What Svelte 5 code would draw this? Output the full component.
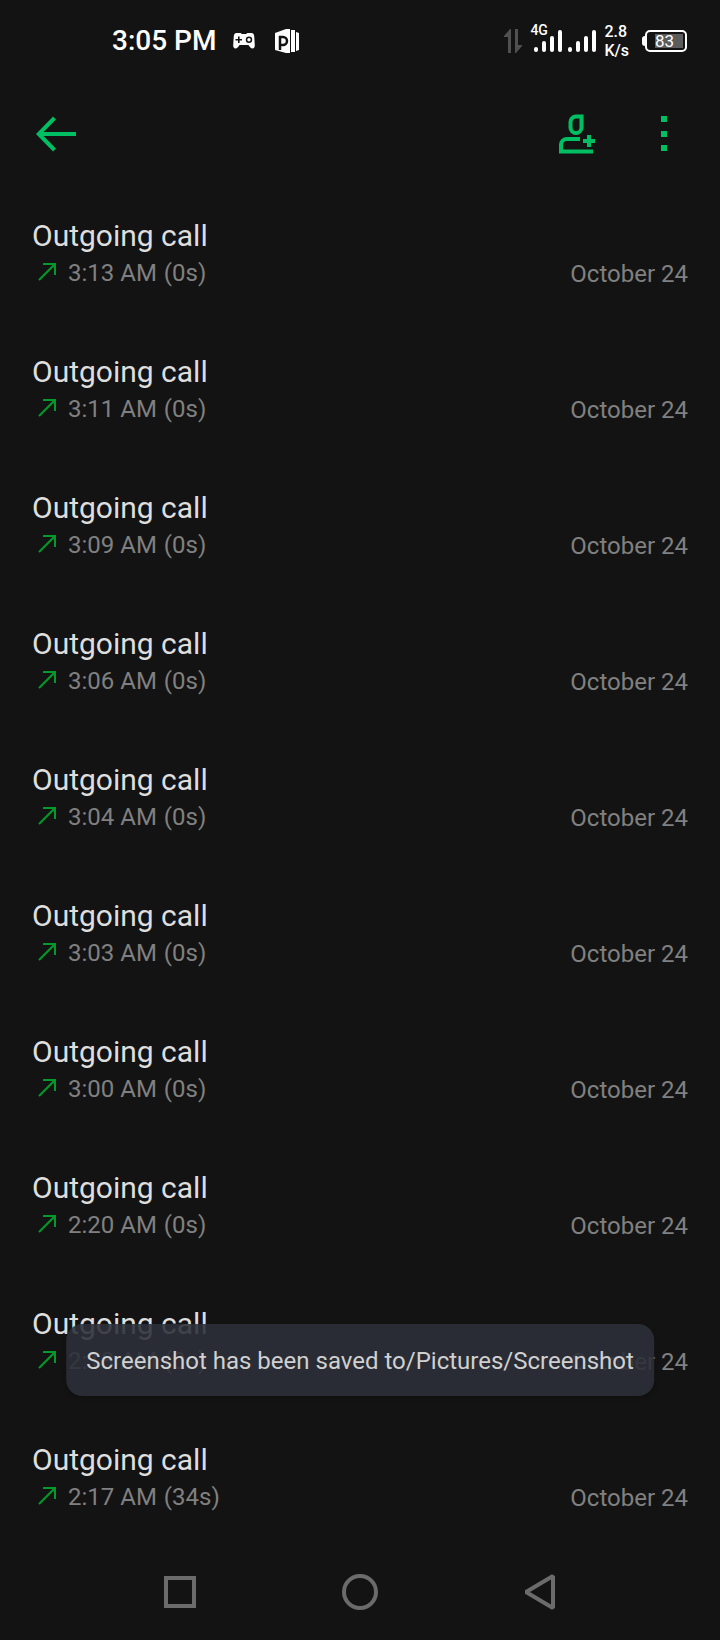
<script lang="ts">
    interface Call {
        time: string;
        duration: string;
        date: string;
    }

    const calls: Call[] = [
        {time: "3:13 AM", duration: "0s", date: "October 24"},
        {time: "3:11 AM", duration: "0s", date: "October 24"},
        {time: "3:09 AM", duration: "0s", date: "October 24"},
        {time: "3:06 AM", duration: "0s", date: "October 24"},
        {time: "3:04 AM", duration: "0s", date: "October 24"},
        {time: "3:03 AM", duration: "0s", date: "October 24"},
        {time: "3:00 AM", duration: "0s", date: "October 24"},
        {time: "2:20 AM", duration: "0s", date: "October 24"},
        {time: "2:18 AM", duration: "0s", date: "October 24"},
        {time: "2:17 AM", duration: "34s", date: "October 24"},
    ];
</script>

{#snippet bars()}
    <svg class="bars" width="28" height="22" viewBox="0 0 28 22" aria-hidden="true">
        <rect x="0" y="17" width="4" height="5" rx="2" />
        <rect x="8" y="11" width="4" height="11" rx="2" />
        <rect x="16" y="6" width="4" height="16" rx="2" />
        <rect x="24" y="0" width="4" height="22" rx="2" />
    </svg>
{/snippet}

<div class="screen">
    <div class="status-bar">
        <span class="clock">3:05 PM</span>
        <svg class="gamepad" width="22" height="16" viewBox="0 0 22 16" aria-hidden="true">
            <path
                fill="#fff"
                fill-rule="evenodd"
                d="M3.500 0h4l1.500 1h4l1.500-1h4C20 0 21 1 21.200 3l.6 9c.1 2-.8 3.500-2.300 3.500-1.700 0-2.500-1.500-4-3.500h-9C5 14 4.200 15.500 2.500 15.500 1 15.500.1 14 .2 12l.6-9C1 1 2 0 3.500 0zM5 3.500V6H2.500v1.600H5V10h1.600V7.600H9V6H6.600V3.500zM16 3.500a3.200 3.200 0 1 0 0 6.400 3.200 3.200 0 0 0 0-6.400z"
            />
            <circle cx="16" cy="6.700" r="1.700" fill="#fff" />
        </svg>
        <svg class="slides" width="24" height="24" viewBox="0 0 24 24" aria-hidden="true">
            <path fill="#fff" d="M0 4 11 0h5v24h-5L0 21z" />
            <path fill="#fff" d="M16 1h4v22h-4zM21 3l3 1v17l-3 1z" />
            <path fill="none" stroke="#131313" stroke-width="2.500" d="M5 21V8h3a4 4 0 0 1 0 8H5" />
            <path fill="none" stroke="#131313" stroke-width="1" d="M15.500 0v24M20.500 0v24" />
        </svg>

        <div class="status-right">
            <svg width="18" height="24" viewBox="0 0 18 24" aria-hidden="true">
                <path fill="#505050" d="M7 0v24H4V8H0V7l6-7zM11 0h3v16h4v1l-6 7h-1z" />
            </svg>
            <div class="signal">
                <span class="network">4G</span>
                {@render bars()}
                {@render bars()}
            </div>
            <div class="speed"><span>2.8</span><span>K/s</span></div>
            <div class="battery"><span class="level">83</span></div>
        </div>
    </div>

    <header class="app-bar">
        <button type="button" aria-label="Back">
            <svg width="40" height="36" viewBox="0 0 40 36" aria-hidden="true">
                <path fill="none" stroke="#00bf63" stroke-width="4" d="M18.500 2 2.700 18l15.800 16M3 18h37" />
            </svg>
        </button>
        <span class="spacer"></span>
        <button type="button" aria-label="Add contact">
            <svg width="38" height="40" viewBox="0 0 38 40" aria-hidden="true">
                <g fill="none" stroke="#00bf63" stroke-width="4">
                    <path d="M24.500 2.500H19a5.500 5.500 0 0 0-5.500 5.500v5.500a5.500 5.500 0 0 0 11 0z" />
                    <path d="M23 25H10a6 6 0 0 0-6 6v6.500h32" />
                    <path d="M32 21v12M26 27h12" />
                </g>
            </svg>
        </button>
        <button type="button" aria-label="More options">
            <svg width="6" height="36" viewBox="0 0 6 36" aria-hidden="true">
                <path fill="#00bf63" d="M0 0h6v6H0zM0 15h6v6H0zM0 29h6v6H0z" />
            </svg>
        </button>
    </header>

    <main>
        <ul class="calls">
            {#each calls as call}
                <li class="call">
                    <div class="info">
                        <span class="title">Outgoing call</span>
                        <div class="meta">
                            <svg width="20" height="22" viewBox="0 0 20 22" aria-hidden="true">
                                <path fill="none" stroke="#039a2b" stroke-width="2" d="M1 18 17 2M5 2h12v11" />
                            </svg>
                            <span class="time">{call.time}</span>
                            <span>({call.duration})</span>
                        </div>
                    </div>
                    <span class="date">{call.date}</span>
                </li>
            {/each}
        </ul>
    </main>

    <nav class="nav-bar">
        <button type="button" aria-label="Recent apps">
            <svg width="36" height="36" viewBox="0 0 36 36" aria-hidden="true">
                <path d="M4 4h28v28H4z" />
            </svg>
        </button>
        <button type="button" aria-label="Home">
            <svg width="36" height="36" viewBox="0 0 36 36" aria-hidden="true">
                <circle cx="18" cy="18" r="16" />
            </svg>
        </button>
        <button type="button" aria-label="Back to previous screen">
            <svg width="36" height="36" viewBox="0 0 36 36" aria-hidden="true">
                <path stroke-linejoin="bevel" d="M31 2v32L4 18z" />
            </svg>
        </button>
    </nav>

    <div class="toast" role="status">Screenshot has been saved to/Pictures/Screenshot</div>
</div>

<style>
    :global(body) {
        margin: 0;
        background: #131313;
    }

    .screen {
        position: relative;
        display: flex;
        flex-direction: column;
        min-height: 100vh;
        background: #131313;
        color: #dedede;
        font-family: Roboto, "Liberation Sans", sans-serif;
    }

    button {
        display: flex;
        align-items: center;
        justify-content: center;
        padding: 0;
        border: 0;
        background: none;
        cursor: pointer;
    }

    svg {
        display: block;
        flex-shrink: 0;
    }

    .status-bar {
        display: flex;
        align-items: center;
        height: 82px;
        padding: 0 33px 0 112px;
        color: #fff;
    }

    .clock {
        font-size: 28px;
        font-weight: 500;
        line-height: 32px;
    }

    .gamepad {
        margin-left: 17px;
    }

    .slides {
        margin-left: 20px;
    }

    .status-right {
        display: flex;
        align-items: center;
        gap: 8px;
        margin-left: auto;
    }

    .signal {
        position: relative;
        display: flex;
        gap: 6px;
        padding-left: 4px;
    }

    .bars {
        fill: #fff;
    }

    .network {
        position: absolute;
        left: 0;
        top: -8px;
        font-size: 14px;
        font-weight: 500;
        line-height: 16px;
    }

    .speed {
        display: flex;
        flex-direction: column;
        font-size: 16px;
        font-weight: 500;
        line-height: 19px;
    }

    .battery {
        position: relative;
        box-sizing: border-box;
        width: 42px;
        height: 22px;
        margin-left: 8px;
        padding: 2px 2px 2px 8px;
        border: 2px solid #fff;
        border-radius: 5px;
    }

    .battery::before {
        content: "";
        position: absolute;
        left: -5px;
        top: 4px;
        width: 3px;
        height: 10px;
        border-radius: 3px 0 0 3px;
        background: #fff;
    }

    .level {
        display: block;
        background: #5c5c5c;
        font-size: 17px;
        line-height: 14px;
    }

    .app-bar {
        display: flex;
        align-items: center;
        gap: 40px;
        height: 104px;
        padding: 0 32px;
    }

    .app-bar button {
        width: 48px;
        height: 48px;
    }

    .spacer {
        flex: 1;
    }

    main {
        flex: 1;
    }

    .calls {
        list-style: none;
        margin: 0;
        padding: 0;
    }

    .call {
        display: flex;
        align-items: flex-end;
        justify-content: space-between;
        padding: 32px 32px 34px;
    }

    .info {
        display: flex;
        flex-direction: column;
        gap: 4px;
    }

    .title {
        font-size: 30px;
        line-height: 36px;
    }

    .meta {
        display: flex;
        align-items: center;
        gap: 10px;
        padding-left: 6px;
        color: #808080;
        font-size: 24px;
        line-height: 30px;
    }

    .time {
        margin-right: -3px;
    }

    .date {
        color: #808080;
        font-size: 24px;
        line-height: 28px;
    }

    .nav-bar {
        display: flex;
        justify-content: center;
        box-sizing: border-box;
        height: 94px;
        padding-bottom: 2px;
    }

    .nav-bar button {
        width: 25%;
    }

    .nav-bar svg {
        fill: none;
        stroke: #6b6b6b;
        stroke-width: 4;
    }

    .toast {
        position: absolute;
        left: 50%;
        bottom: 244px;
        padding: 21px 20px 19px;
        transform: translateX(-50%);
        border-radius: 16px;
        background: rgba(44, 47, 56, 0.89);
        box-shadow: 0 2px 4px rgba(0, 0, 0, 0.2);
        color: #d0d0d0;
        font-size: 24px;
        line-height: 32px;
        white-space: nowrap;
    }
</style>
